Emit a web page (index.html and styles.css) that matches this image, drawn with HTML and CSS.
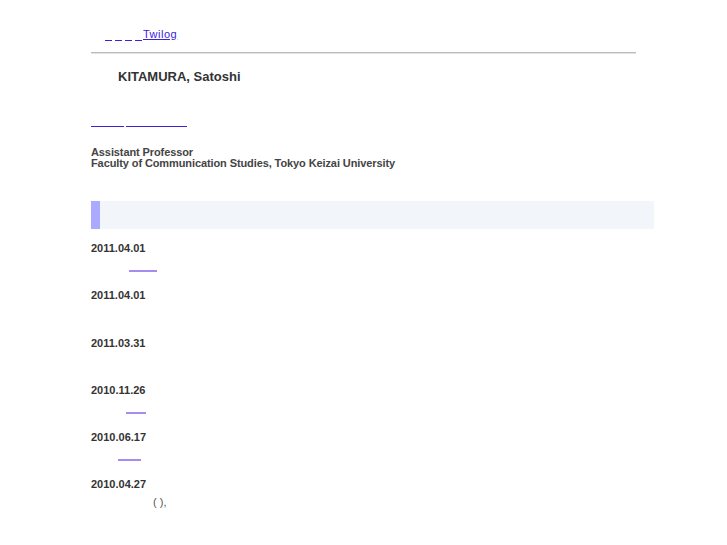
FILE: index.html
```html
<!DOCTYPE html>
<html>
<head>
<meta charset="utf-8">
<link rel="stylesheet" href="styles.css">
</head>
<body>
<div class="page">
  <div class="topnav">
    <a class="blank w7" href="#"></a><span class="gap"></span><a class="blank w7" href="#"></a><span class="gap"></span><a class="blank w7" href="#"></a><span class="gap"></span><a class="blank w7" href="#"></a><a class="link" href="#">Twilog</a>
  </div>
  <div class="rule"></div>
  <h1 class="name">KITAMURA, Satoshi</h1>
  <div class="links">
    <a class="blank top w33" href="#"></a><span class="gap"></span><a class="blank top w61" href="#"></a>
  </div>
  <p class="affil">Assistant Professor<br>Faculty of Communication Studies, Tokyo Keizai University</p>
  <div class="band"><span class="band-bar"></span></div>
  <ul class="news">
    <li class="item"><div class="date">2011.04.01</div><div class="text"><span class="pad p38"></span><a class="blank v w28" href="#"></a></div></li>
    <li class="item"><div class="date">2011.04.01</div><div class="text"></div></li>
    <li class="item"><div class="date">2011.03.31</div><div class="text"></div></li>
    <li class="item"><div class="date">2010.11.26</div><div class="text"><span class="pad p35"></span><a class="blank v w20" href="#"></a></div></li>
    <li class="item"><div class="date">2010.06.17</div><div class="text"><span class="pad p27"></span><a class="blank v w23" href="#"></a></div></li>
    <li class="item"><div class="date">2010.04.27</div><div class="text"><span class="pad p62"></span>( ),</div></li>
  </ul>
</div>
</body>
</html>
```

FILE: styles.css
```css
html, body {
  margin: 0;
  padding: 0;
  background: #ffffff;
}
body {
  font-family: "Liberation Sans", Arial, sans-serif;
  color: #444444;
}
.page {
  margin-left: 91px;
  width: 563px;
}
.topnav {
  padding-top: 28px;
  padding-left: 14px;
  font-size: 11px;
  line-height: 13px;
  height: 13px;
  display: flex;
  align-items: flex-end;
}
.blank {
  display: inline-block;
  height: 11px;
  border-bottom: 1px solid #3a22dd;
}
.blank.v {
  border-bottom: 2px solid #a58cf0;
  height: 10px;
}
.gap {
  display: inline-block;
  width: 3px;
}
.links .gap { width: 2px; }
.w7 { width: 7px; }
.w20 { width: 20px; }
.w23 { width: 23px; }
.w28 { width: 28px; }
.w33 { width: 33px; }
.w61 { width: 61px; }
.link {
  color: #3a22dd;
  text-decoration: underline;
  margin-left: 1px;
  letter-spacing: 0.5px;
}
.rule {
  margin-top: 11px;
  width: 545px;
  height: 0;
  border-top: 1px solid #bcbcbc;
  border-bottom: 1px solid #e2e2e2;
}
.name {
  margin: 15px 0 0 0;
  padding-left: 27px;
  font-size: 13px;
  line-height: 16px;
  font-weight: bold;
  color: #333333;
}
.links {
  margin-top: 30px;
  height: 13px;
  display: flex;
  align-items: flex-start;
}
.affil {
  margin: 19px 0 0 0;
  font-size: 11px;
  line-height: 11px;
  font-weight: bold;
  color: #444444;
  letter-spacing: -0.1px;
}
.band {
  margin-top: 32px;
  height: 28px;
  background: #f2f6fa;
  display: flex;
}
.band-bar {
  width: 9px;
  background: #aaaaff;
}
.news {
  list-style: none;
  margin: 13px 0 0 0;
  padding: 0;
}
.item {
  height: 47.25px;
}
.date {
  font-size: 11px;
  line-height: 13px;
  font-weight: bold;
  color: #333333;
}
.text {
  margin-top: 5px;
  height: 13px;
  font-size: 11px;
  line-height: 13px;
  color: #555555;
  display: flex;
  align-items: flex-start;
}
.pad { display: inline-block; }
.p27 { width: 27px; }
.p35 { width: 35px; }
.p38 { width: 38px; }
.p62 { width: 62px; }
```
